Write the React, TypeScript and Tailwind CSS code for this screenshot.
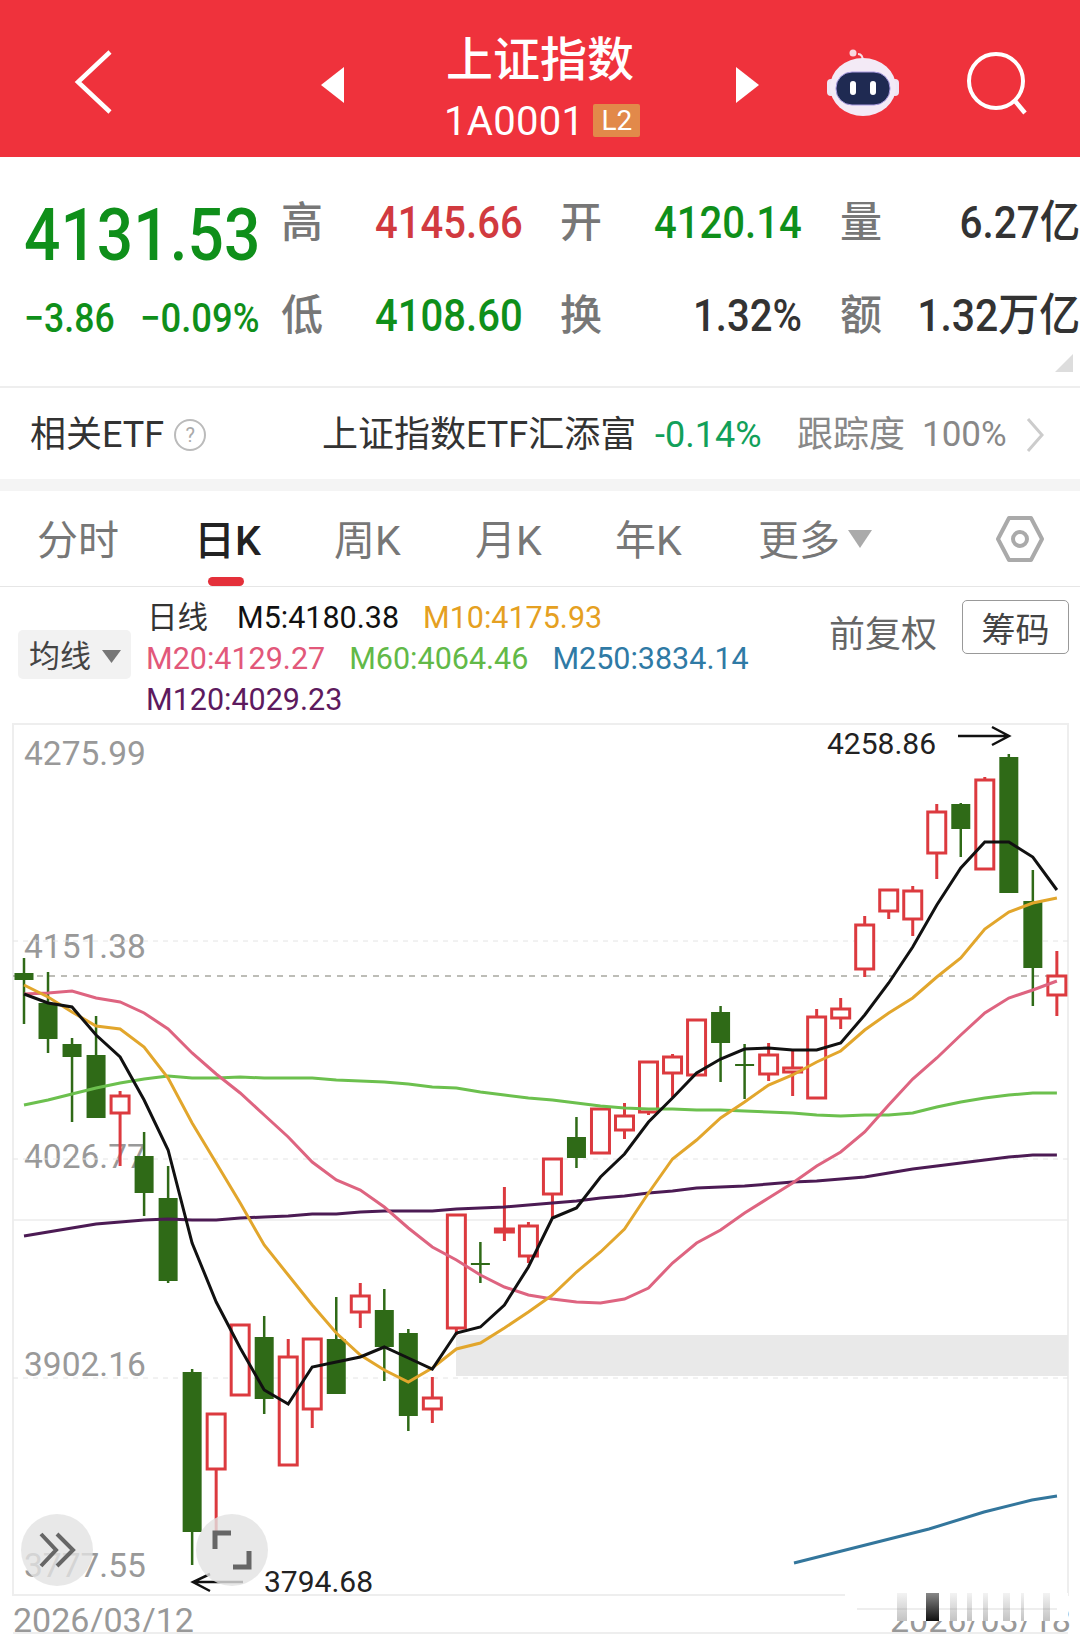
const STEP = 24.02;
const cx = (i: number) => 24 + STEP * i;

// [wickTop, bodyTop, bodyBottom, wickBottom, up?]
const candles: [number, number, number, number, boolean][] = [
  [958, 973, 980, 1024, false],
  [972, 1003, 1039, 1053, false],
  [1038, 1044, 1057, 1122, false],
  [1016, 1055, 1118, 1118, false],
  [1091, 1096, 1113, 1166, true],
  [1132, 1156, 1193, 1216, false],
  [1166, 1198, 1281, 1283, false],
  [1369, 1372, 1532, 1565, false],
  [1414, 1414, 1469, 1535, true],
  [1324, 1325, 1395, 1395, true],
  [1316, 1337, 1399, 1414, false],
  [1339, 1357, 1465, 1465, true],
  [1338, 1339, 1409, 1428, true],
  [1297, 1339, 1394, 1394, false],
  [1283, 1296, 1312, 1328, true],
  [1289, 1310, 1347, 1381, false],
  [1329, 1333, 1416, 1431, false],
  [1377, 1398, 1409, 1423, true],
  [1215, 1215, 1328, 1335, true],
  [1242, 1263, 1265, 1283, false],
  [1187, 1229, 1232, 1241, true],
  [1222, 1226, 1256, 1263, true],
  [1159, 1159, 1194, 1218, true],
  [1117, 1137, 1158, 1168, false],
  [1109, 1109, 1153, 1154, true],
  [1103, 1116, 1130, 1139, true],
  [1061, 1062, 1112, 1115, true],
  [1054, 1057, 1073, 1097, true],
  [1020, 1020, 1075, 1075, true],
  [1006, 1012, 1043, 1082, false],
  [1044, 1064, 1066, 1099, false],
  [1043, 1055, 1074, 1081, true],
  [1050, 1068, 1072, 1096, true],
  [1009, 1017, 1098, 1098, true],
  [998, 1009, 1018, 1029, true],
  [916, 925, 969, 977, true],
  [890, 890, 911, 919, true],
  [886, 891, 919, 936, true],
  [804, 812, 853, 879, true],
  [803, 804, 829, 857, false],
  [777, 780, 869, 869, true],
  [754, 757, 893, 893, false],
  [870, 901, 968, 1006, false],
  [951, 976, 995, 1016, true],
];

const m5 = [994, 1003, 1007, 1035, 1057, 1100, 1150, 1243, 1302, 1348, 1390, 1404, 1367, 1362, 1357, 1347, 1358, 1369, 1333, 1327, 1305, 1267, 1218, 1208, 1177, 1154, 1122, 1098, 1073, 1059, 1049, 1048, 1050, 1050, 1043, 1015, 983, 947, 905, 868, 842, 842, 857, 890];
const m10 = [985, 997, 1012, 1026, 1029, 1047, 1078, 1123, 1163, 1203, 1245, 1275, 1305, 1333, 1355, 1370, 1382, 1368, 1349, 1343, 1328, 1312, 1295, 1272, 1252, 1229, 1193, 1159, 1140, 1118, 1102, 1085, 1075, 1062, 1051, 1030, 1013, 998, 977, 958, 929, 912, 903, 898];
const m20 = [994, 993, 991, 998, 1002, 1013, 1029, 1053, 1074, 1093, 1115, 1137, 1162, 1180, 1190, 1207, 1228, 1247, 1260, 1275, 1287, 1295, 1299, 1302, 1303, 1299, 1288, 1263, 1243, 1230, 1213, 1198, 1183, 1166, 1152, 1132, 1105, 1079, 1058, 1035, 1013, 998, 990, 981];
const m60 = [1105, 1100, 1094, 1088, 1083, 1079, 1076, 1078, 1078, 1077, 1078, 1078, 1078, 1080, 1081, 1082, 1084, 1087, 1088, 1092, 1095, 1098, 1100, 1103, 1106, 1108, 1109, 1109, 1110, 1110, 1111, 1112, 1113, 1115, 1116, 1115, 1115, 1113, 1107, 1102, 1098, 1095, 1093, 1093];
const m120 = [1236, 1232, 1228, 1224, 1222, 1220, 1219, 1220, 1220, 1218, 1217, 1216, 1214, 1214, 1212, 1211, 1211, 1211, 1209, 1208, 1207, 1205, 1203, 1201, 1198, 1196, 1193, 1191, 1188, 1187, 1186, 1184, 1182, 1181, 1179, 1177, 1173, 1169, 1166, 1163, 1160, 1157, 1155, 1155];

const toPoints = (ys: number[]) => ys.map((y, i) => `${cx(i).toFixed(1)},${y}`).join(" ");

const GREEN = "#2f6a17";
const RED = "#dc3a3f";

function Robot() {
  return (
    <svg width="80" height="72" viewBox="822 46 80 72">
      <path d="M862 62c0-5-2-8-5-8" fill="none" stroke="#f6dfe6" strokeWidth="2" />
      <circle cx="852" cy="53" r="3.5" fill="#f8d8e0" />
      <rect x="826" y="79" width="8" height="17" rx="4" fill="#efe6f4" />
      <rect x="890" y="79" width="8" height="17" rx="4" fill="#efe6f4" />
      <ellipse cx="862" cy="87" rx="33" ry="29" fill="#f3eaf6" />
      <rect x="835" y="72" width="54" height="33" rx="16" fill="#1f2a52" stroke="#a99be0" strokeWidth="1" />
      <rect x="849" y="81" width="6" height="14" rx="3" fill="#ffffff" />
      <rect x="869" y="81" width="6" height="14" rx="3" fill="#ffffff" />
    </svg>
  );
}

function Header() {
  return (
    <header className="h-[157px] bg-[#ef323c] flex items-start text-white">
      <svg width="40" height="66" viewBox="0 0 40 66" className="ml-[74px] mt-[49px]">
        <path d="M36 3 L4 33 L36 63" fill="none" stroke="#fff" strokeWidth="4.5" />
      </svg>
      <svg width="24" height="36" viewBox="0 0 24 36" className="ml-[207px] mt-[67px]">
        <path d="M23 0 V36 L0 18 Z" fill="#fff" />
      </svg>
      <div className="ml-[101px] w-[199px] flex flex-col items-start pt-[33px]">
        <div className="text-[47px] leading-[54px] font-medium whitespace-nowrap">上证指数</div>
        <div className="flex items-center mt-[18px] h-[34px]">
          <span className="text-[40px] leading-[34px] tracking-[0.3px] -ml-[2px]">1A0001</span>
          <span className="ml-[9px] w-[47px] h-[33px] -mt-[3px] rounded-[2px] bg-[#e2894a] text-[28px] leading-[33px] text-center">L2</span>
        </div>
      </div>
      <svg width="24" height="36" viewBox="0 0 24 36" className="ml-[90px] mt-[67px]">
        <path d="M1 0 V36 L24 18 Z" fill="#fff" />
      </svg>
      <div className="ml-[64px] mt-[46px]">
        <Robot />
      </div>
      <svg width="64" height="68" viewBox="0 0 64 68" className="ml-[61px] mt-[51px]">
        <circle cx="32" cy="30" r="27" fill="none" stroke="#fff" strokeWidth="4" />
        <path d="M51 50 L61 62" stroke="#fff" strokeWidth="4.5" fill="none" />
      </svg>
    </header>
  );
}

function Label({ children }: { children: string }) {
  return <div className="text-[42px] leading-[93px] text-[#777]">{children}</div>;
}

function Stats() {
  return (
    <section className="relative h-[231px] border-b-[2px] border-[#eeeeee] pt-[19px] flex">
      <div className="w-[281px] flex flex-col pl-[24px] text-[#0f8f1a]">
        <div className="h-[120px] text-[72px] leading-[120px] font-medium origin-left scale-x-[0.89] whitespace-nowrap">4131.53</div>
        <div className="h-[45px] flex text-[40px] leading-[45px] font-medium whitespace-nowrap">
          <span className="w-[116px] origin-left scale-x-[0.89]">−3.86</span>
          <span className="origin-left scale-x-[0.91]">−0.09%</span>
        </div>
      </div>
      <div className="flex-1 grid grid-cols-[94px_185px_94px_148px_38px_1fr] auto-rows-[93px] text-[45px] leading-[93px] font-medium whitespace-nowrap">
        <Label>高</Label>
        <div className="text-[#d13a3f] origin-left scale-x-[0.89]">4145.66</div>
        <Label>开</Label>
        <div className="text-[#0f8f1a] origin-left scale-x-[0.89]">4120.14</div>
        <div />
        <div className="flex justify-between">
          <Label>量</Label>
          <div className="text-[#333] origin-right scale-x-[0.9]">6.27亿</div>
        </div>
        <Label>低</Label>
        <div className="text-[#0f8f1a] origin-left scale-x-[0.89]">4108.60</div>
        <Label>换</Label>
        <div className="text-[#333] text-right origin-right scale-x-[0.89]">1.32%</div>
        <div />
        <div className="flex justify-between">
          <Label>额</Label>
          <div className="text-[#333] origin-right scale-x-[0.91]">1.32万亿</div>
        </div>
      </div>
      <svg width="18" height="18" viewBox="0 0 18 18" className="absolute right-[7px] bottom-[14px]">
        <path d="M18 0 V18 H0 Z" fill="#dddddd" />
      </svg>
    </section>
  );
}

function EtfRow() {
  return (
    <section className="h-[91px] flex items-center pl-[30px] pt-[2px] text-[36px] leading-[46px] whitespace-nowrap">
      <div className="w-[292px] flex items-center text-[#333]">
        <span>相关ETF</span>
        <span className="ml-[10px] w-[32px] h-[32px] rounded-full border-[2px] border-[#bbbbbb] text-[#aaa] text-[20px] leading-[28px] text-center">?</span>
      </div>
      <span className="w-[312px] text-[#333]">上证指数ETF汇添富</span>
      <span className="ml-[21px] w-[106px] text-[#12a05a]">-0.14%</span>
      <span className="ml-[36px] w-[108px] text-[#888]">跟踪度</span>
      <span className="ml-[17px] w-[84px] text-[35px] text-[#888]">100%</span>
      <svg width="18" height="34" viewBox="0 0 18 34" className="ml-[20px]">
        <path d="M2 1 L16 17 L2 33" fill="none" stroke="#cccccc" strokeWidth="3" />
      </svg>
    </section>
  );
}

function Tabs() {
  return (
    <section className="h-[96px] border-b border-[#e6e6e6] pl-[37px] pt-[4px] flex items-center text-[41px] leading-[50px] text-[#777] whitespace-nowrap">
      <span className="w-[157px]">分时</span>
      <span className="relative w-[140px] text-[#222] font-medium">
        日K
        <span className="absolute left-[14px] top-[61px] w-[36px] h-[9px] rounded-full bg-[#e4303a]" />
      </span>
      <span className="w-[141px]">周K</span>
      <span className="w-[140px]">月K</span>
      <span className="w-[143px]">年K</span>
      <span className="w-[84px]">更多</span>
      <svg width="24" height="18" viewBox="0 0 24 18" className="ml-[6px] mb-[4px]">
        <path d="M0 0 H24 L12 18 Z" fill="#aaaaaa" />
      </svg>
      <svg width="50" height="48" viewBox="0 0 50 48" className="ml-[123px] mb-[4px]">
        <path d="M14 3 H36 L47 24 L36 45 H14 L3 24 Z" fill="none" stroke="#aaaaaa" strokeWidth="4" strokeLinejoin="round" />
        <circle cx="25" cy="24" r="7" fill="none" stroke="#aaaaaa" strokeWidth="4" />
      </svg>
    </section>
  );
}

function MaPanel() {
  return (
    <section className="h-[136px] flex items-start text-[30.5px] leading-[41px] whitespace-nowrap">
      <div className="ml-[18px] mt-[43px] w-[113px] h-[49px] rounded-[5px] bg-[#f2f2f2] flex items-center pl-[11px] pt-[3px] text-[31px] text-[#444]">
        均线
        <svg width="19" height="13" viewBox="0 0 19 13" className="ml-[11px]">
          <path d="M0 0 H19 L9.5 13 Z" fill="#777777" />
        </svg>
      </div>
      <div className="ml-[15px] mt-[10px] flex flex-col">
        <div className="flex">
          <span className="ml-[1px] w-[90px] text-[#333]">日线</span>
          <span className="w-[186px] text-[#111]">M5:4180.38</span>
          <span className="text-[#e5a021]">M10:4175.93</span>
        </div>
        <div className="flex gap-[24px]">
          <span className="text-[#e2587a]">M20:4129.27</span>
          <span className="text-[#62b948]">M60:4064.46</span>
          <span className="text-[#2f7aa5]">M250:3834.14</span>
        </div>
        <div className="text-[#5d1a5e]">M120:4029.23</div>
      </div>
      <div className="ml-auto mr-[11px] mt-[13px] flex items-start gap-[25px]">
        <span className="text-[36px] leading-[46px] mt-[12px] text-[#666]">前复权</span>
        <span className="w-[107px] h-[54px] rounded-[5px] border border-[#999] text-[34px] leading-[59px] text-center text-[#444]">筹码</span>
      </div>
    </section>
  );
}

function Chart() {
  return (
    <section className="relative h-[921px] overflow-hidden text-[33.5px] leading-[32px] text-[#999] whitespace-nowrap">
      <div className="absolute left-[24px] top-[15px]">4275.99</div>
      <div className="absolute left-[24px] top-[208px]">4151.38</div>
      <div className="absolute left-[24px] top-[418px]">4026.77</div>
      <div className="absolute left-[24px] top-[626px]">3902.16</div>
      <div className="absolute left-[24px] top-[827px]">3777.55</div>
      <div className="absolute left-[13px] top-[881px] text-[34px]">2026/03/12</div>
      <div className="absolute left-[890px] top-[881px] text-[34px]">2026/03/18</div>

      <svg width="1080" height="921" viewBox="0 723 1080 921" className="absolute left-0 top-0" fill="none">
        <rect x="13" y="724" width="1055" height="871" stroke="#eeeeee" strokeWidth="2" />
        <path d="M13 1633 H1068" stroke="#eeeeee" strokeWidth="2" />
        <path d="M13 941 H1068 M13 1159 H1068 M13 1378 H1068" stroke="#e4e4e4" strokeWidth="1" strokeDasharray="5 5" />
        <path d="M13 1220 H1068" stroke="#ececec" strokeWidth="1.5" />
        <rect x="456" y="1335" width="612" height="41" fill="#e9e9e9" />
        <path d="M13 976 H1068" stroke="#a8a8a0" strokeWidth="1.5" strokeDasharray="6 6" />

        {candles.map(([wt, bt, bb, wb, up], i) => {
          const x = cx(i);
          if (up) {
            return (
              <g key={i}>
                <path d={`M${x} ${wt} V${wb}`} stroke={RED} strokeWidth="3" />
                <rect x={x - 9} y={bt} width="18" height={bb - bt} fill="#ffffff" stroke={RED} strokeWidth="3" />
              </g>
            );
          }
          return (
            <g key={i}>
              <path d={`M${x} ${wt} V${wb}`} stroke={GREEN} strokeWidth="2.5" />
              <rect x={x - 9.5} y={bt} width="19" height={bb - bt} fill={GREEN} />
            </g>
          );
        })}

        <polyline points={toPoints(m120)} stroke="#4c1b54" strokeWidth="3" />
        <polyline points={toPoints(m60)} stroke="#6cc04e" strokeWidth="3" />
        <polyline points={toPoints(m20)} stroke="#de6480" strokeWidth="3" />
        <polyline points={toPoints(m10)} stroke="#e2a62c" strokeWidth="3" />
        <polyline points={toPoints(m5)} stroke="#111111" strokeWidth="3" />
        <polyline points="794,1563 929,1529 984,1512 1032,1500 1057,1496" stroke="#33769c" strokeWidth="3" />

        <path d="M958 736 H1008 M992 727 L1009 736 L992 745" stroke="#111111" strokeWidth="2.5" />
        <path d="M243 1582 H194 M210 1574 L193 1582 L210 1591" stroke="#111111" strokeWidth="2.5" />
      </svg>

      <div className="absolute left-[827px] top-[6px] text-[30px] leading-[30px] text-[#222]">4258.86</div>
      <div className="absolute left-[264px] top-[844px] text-[30px] leading-[30px] text-[#222]">3794.68</div>

      {/* the two round buttons on top of the chart */}
      <div className="absolute left-[21px] top-[791px] w-[72px] h-[72px] rounded-full bg-[#e2e2e2]/80 flex items-center justify-center">
        <svg width="38" height="36" viewBox="0 0 38 36" fill="none" stroke="#666666" strokeWidth="4">
          <path d="M3 2 L18 18 L3 34 M19 2 L35 18 L19 34" />
        </svg>
      </div>
      <div className="absolute left-[196px] top-[791px] w-[72px] h-[72px] rounded-full bg-[#e2e2e2]/80 flex items-center justify-center">
        <svg width="40" height="40" viewBox="0 0 40 40" fill="none" stroke="#666666" strokeWidth="5">
          <path d="M3 19 V3 H19 M21 37 H37 V21" />
        </svg>
      </div>

      {/* smeared band over the right date */}
      <svg width="223" height="28" viewBox="0 0 223 28" className="absolute left-[845px] top-[870px]">
        <defs>
          <linearGradient id="smear" x1="0" y1="0" x2="0" y2="1">
            <stop offset="0" stopColor="#888888" stopOpacity="0.1" />
            <stop offset="1" stopColor="#888888" stopOpacity="0.5" />
          </linearGradient>
          <linearGradient id="smearDark" x1="0" y1="0" x2="0" y2="1">
            <stop offset="0" stopColor="#888888" />
            <stop offset="1" stopColor="#111111" />
          </linearGradient>
        </defs>
        <rect x="0" y="0" width="223" height="28" fill="#ffffff" />
        <rect x="12" y="15" width="200" height="2" fill="#eeeeee" />
        <rect x="52" y="0" width="10" height="28" fill="url(#smear)" />
        <rect x="81" y="0" width="13" height="28" fill="url(#smearDark)" />
        <rect x="105" y="0" width="7" height="28" fill="url(#smear)" />
        <rect x="122" y="0" width="5" height="28" fill="url(#smear)" />
        <rect x="138" y="0" width="5" height="28" fill="url(#smear)" />
        <rect x="158" y="0" width="7" height="28" fill="url(#smear)" />
        <rect x="176" y="0" width="3" height="28" fill="url(#smear)" />
        <rect x="198" y="0" width="7" height="28" fill="url(#smear)" />
      </svg>
    </section>
  );
}

export default function App() {
  return (
    <div className="w-[1080px] h-[1645px] overflow-hidden bg-white font-['Roboto','Noto_Sans_CJK_SC',sans-serif]">
      <Header />
      <Stats />
      <EtfRow />
      <div className="h-[12px] bg-[#f4f4f4]" />
      <Tabs />
      <MaPanel />
      <Chart />
    </div>
  );
}
